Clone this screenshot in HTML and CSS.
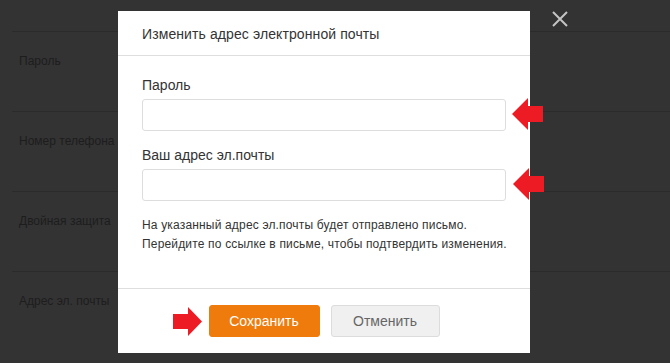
FILE: index.html
```html
<!DOCTYPE html>
<html lang="ru">
<head>
    <meta charset="UTF-8">
    <title>Изменить адрес электронной почты</title>
    <link rel="stylesheet" href="styles.css">
</head>
<body>
    <div class="settings">
        <div class="row">Пароль</div>
        <div class="row">Номер телефона</div>
        <div class="row">Двойная защита</div>
        <div class="row">Адрес эл. почты</div>
    </div>

    <svg class="close" width="16" height="16" viewBox="0 0 16 16">
        <path d="M1 1L15 15M15 1L1 15" stroke="#c4c4c4" stroke-width="2"/>
    </svg>

    <div class="modal">
        <div class="modal-head">Изменить адрес электронной почты</div>
        <div class="modal-body">
            <div class="field">
                <label for="pass">Пароль</label>
                <input type="password" id="pass">
            </div>
            <div class="field">
                <label for="mail">Ваш адрес эл.почты</label>
                <input type="text" id="mail">
            </div>
            <p class="note">На указанный адрес эл.почты будет отправлено письмо.<br>Перейдите по ссылке в письме, чтобы подтвердить изменения.</p>
        </div>
        <div class="modal-foot">
            <button class="btn btn-save">Сохранить</button>
            <button class="btn btn-cancel">Отменить</button>
        </div>

        <svg class="arrow arrow1" width="32" height="33" viewBox="0 0 32 33">
            <polygon points="0,16 16,0 16,8 31,8 31,24 16,24 16,32" fill="#ed1c24"/>
        </svg>
        <svg class="arrow arrow2" width="32" height="33" viewBox="0 0 32 33">
            <polygon points="0,16 16,0 16,8 31,8 31,24 16,24 16,32" fill="#ed1c24"/>
        </svg>
        <svg class="arrow arrow3" width="30" height="30" viewBox="0 0 30 30">
            <polygon points="0,7 15,7 15,0 29,14.5 15,29 15,22 0,22" fill="#ed1c24"/>
        </svg>
    </div>
</body>
</html>
```

FILE: styles.css
```css
html{
  font-family: "Liberation Sans", Arial, sans-serif;
}

body{
  margin: 0;
  background-color: #333333;
  height: 363px;
  overflow: hidden;
}

.settings{
  margin-left: 12px;
  padding-top: 31px;
}

.row{
  border-top: 1px solid #2b2b2b;
  height: 59px;
  padding: 20px 0 0 7px;
  font-size: 12px;
  line-height: 18px;
  color: #1d1d1d;
}

.close{
  position: absolute;
  left: 552px;
  top: 11px;
}

.modal{
  position: absolute;
  left: 118px;
  top: 11px;
  width: 412px;
  background-color: #fff;
  color: #333;
}

.modal-head{
  padding: 13px 24px 11px;
  font-size: 14px;
  line-height: 20px;
  letter-spacing: 0.1px;
  border-bottom: 1px solid #dedede;
}

.modal-body{
  padding: 19px 24px 34px;
}

.field{
  margin-bottom: 14px;
}

.field label{
  display: block;
  font-size: 14px;
  line-height: 20px;
  margin-bottom: 4px;
}

.field input{
  display: block;
  box-sizing: border-box;
  width: 100%;
  height: 32px;
  border: 1px solid #dddddd;
  border-radius: 3px;
  margin: 0;
}

.note{
  margin: 0;
  margin-top: 15px;
  font-size: 12px;
  line-height: 19px;
  letter-spacing: 0.17px;
  white-space: nowrap;
}

.modal-foot{
  border-top: 1px solid #dedede;
  padding: 16px 0;
  display: flex;
  justify-content: center;
  gap: 11px;
}

.btn{
  height: 32px;
  border-radius: 3px;
  font-family: "Liberation Sans", Arial, sans-serif;
  font-size: 14px;
  padding: 0;
  margin: 0;
}

.btn-save{
  width: 111px;
  background-color: #ee7b0b;
  border: 1px solid #ee7b0b;
  color: #fff;
}

.btn-cancel{
  width: 109px;
  background-color: #f0f0f0;
  border: 1px solid #dcdcdc;
  color: #666;
}

.arrow{
  position: absolute;
}

.arrow1{
  left: 394px;
  top: 87px;
}

.arrow2{
  left: 395px;
  top: 157px;
}

.arrow3{
  left: 55px;
  top: 296px;
}
```
